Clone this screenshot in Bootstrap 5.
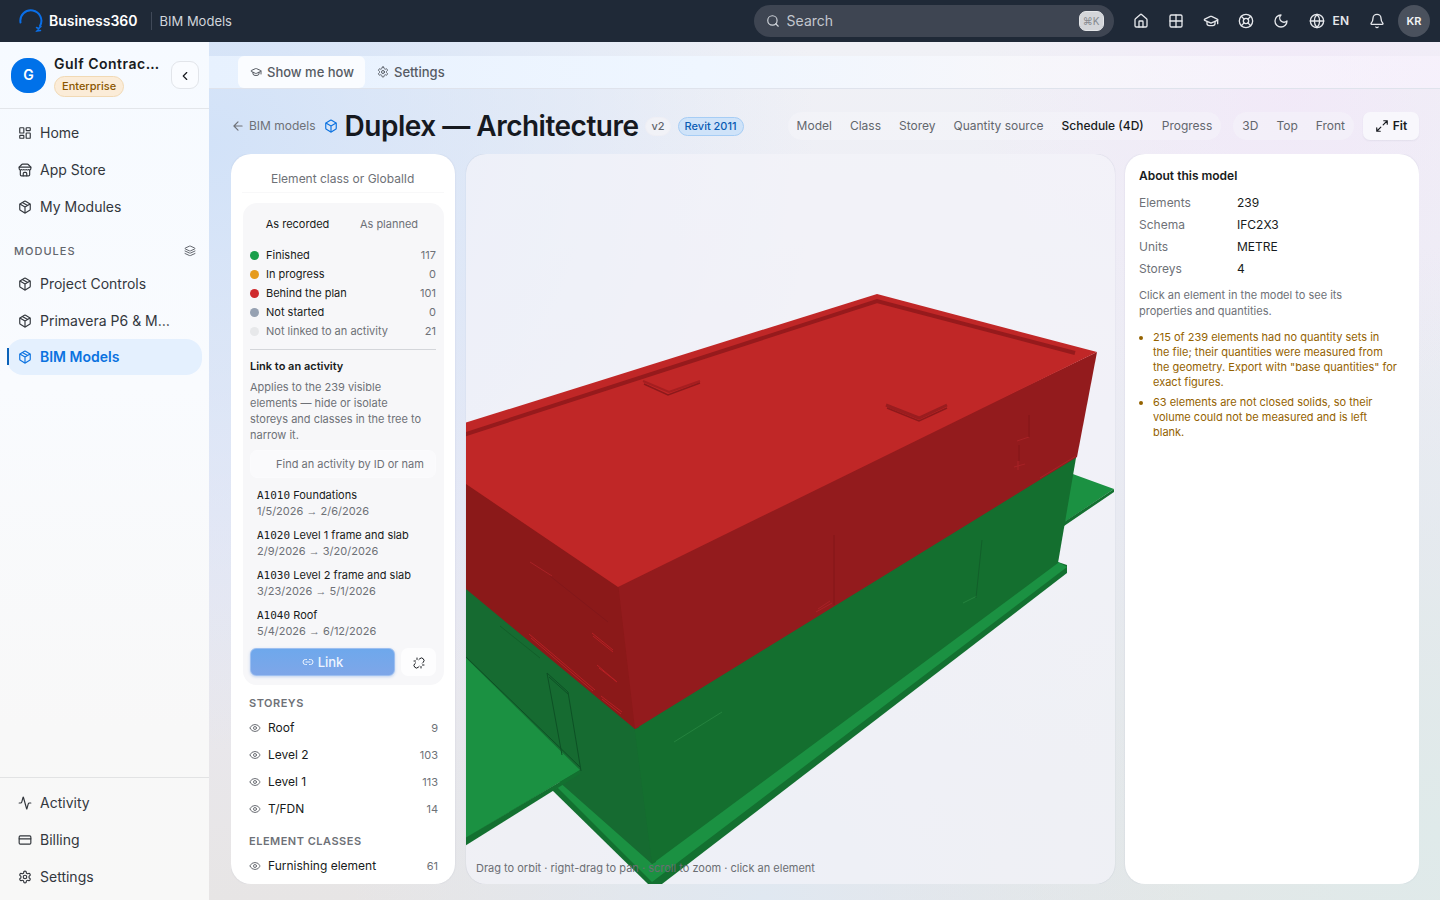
<!DOCTYPE html>
<html lang="en">
<head>
<meta charset="utf-8">
<meta name="viewport" content="width=device-width, initial-scale=1">
<title>BIM Models – Business360</title>
<link rel="stylesheet" href="https://cdn.jsdelivr.net/npm/bootstrap@5.3.0/dist/css/bootstrap.min.css">
<style>
  body { font-family: Inter, "Liberation Sans", sans-serif; font-size: 12px; line-height: 16px; color: #181b20; }
  a { color: inherit; text-decoration: none; }
  button { color: inherit; }
  .ico { width: 14px; height: 14px; flex: none; fill: none; stroke: currentColor; stroke-width: 2; stroke-linecap: round; stroke-linejoin: round; }
  .ico-16 { width: 16px; height: 16px; }
  .ico-12 { width: 12px; height: 12px; }
  .text-soft { color: #6e7177; }
  .text-brand { color: #0b72e0; }

  /* top bar */
  .topbar { height: 42px; background: #1f2937; color: #e5e7eb; padding: 0 10px 0 19px; }
  .brand-name { font-size: 14px; font-weight: 600; color: #fff; margin-left: 6px; }
  .brand-sub { font-size: 13px; color: #d1d5db; border-left: 1px solid #404958; margin-left: 14px; padding: 1px 0 1px 7px; }
  .search-box { width: 360px; height: 32px; border-radius: 16px; background: #3e4552; padding: 0 10px 0 12px; margin-right: 10px; color: #d1d5db; }
  .search-box input { background: none; border: 0; outline: 0; font-size: 14px; color: #fff; padding: 0 0 0 7px; min-width: 0; }
  .search-box input::placeholder { color: #c3c7ce; opacity: 1; }
  .keycap { font: 10px/18px Inter, "DejaVu Sans", sans-serif; color: #85898f; background: #d3d5d9; border: 1px solid #e4e6e9; border-radius: 7px; width: 25px; text-align: center; padding: 0; }
  .top-btn { width: 35px; height: 32px; border: 0; background: none; padding: 0; }
  .lang-btn { width: auto; font-size: 12px; font-weight: 600; margin: 0 10px; }
  .user-dot { width: 32px; height: 32px; border-radius: 50%; border: 0; background: #4a515d; color: #f3f4f6; font-size: 11px; font-weight: 600; }

  /* sidebar */
  .side { width: 209px; flex: none; background: linear-gradient(180deg, #f6faff 0, #f9fbfe 40%, #f8f8f8 80%, #f8f8f7 100%); }
  .side-head { height: 67px; padding: 0 10px 0 11px; border-bottom: 1px solid #e3e6ea; }
  .org-dot { width: 35px; height: 35px; flex: none; border-radius: 16px; background: #0071e9; color: #fff; font-size: 14px; font-weight: 600; }
  .org-name { font-size: 14px; font-weight: 600; line-height: 20px; letter-spacing: .5px; }
  .tier { font-size: 11px; font-weight: 500; line-height: 19px; color: #8a5600; background: #fbecd8; border: 1px solid #f1d9b4; border-radius: 11px; padding: 0 7px; margin-top: 2px; }
  .fold-btn { width: 28px; height: 28px; flex: none; border: 1px solid #e2e5ea; border-radius: 9px; background: #fafcff; padding: 0; }
  .side-nav { padding-top: 5px; }
  .side-link { height: 37px; padding: 0 18px; font-size: 14px; color: #33373d; gap: 8px; }
  .side-link.current { color: #0b72e0; font-weight: 600; height: 36px; margin: 0 7px; padding: 0 11px; border-radius: 16px; background: #e4f0fe; position: relative; }
  .side-link.current::before { content: ""; position: absolute; left: 0; top: 9px; width: 2px; height: 17px; background: #0b62b8; }
  .side-cap { font-size: 11px; font-weight: 500; letter-spacing: 1px; color: #62666d; padding: 0 13px 0 14px; height: 24px; margin-top: 14px; margin-bottom: 2px; }
  .side-foot { border-top: 1px solid #e2e3e4; padding: 6px 0 5px; }

  /* main area */
  .stage { background:
      radial-gradient(circle at 88% 6%, rgba(243,228,250,.55), rgba(243,228,250,0) 24%),
      radial-gradient(circle at 0 12%, #d2e2f8 0, rgba(210,226,248,0) 42%),
      radial-gradient(circle at 45% 100%, #e0e8f1 0, rgba(224,232,241,0) 38%),
      radial-gradient(circle at 100% 92%, #dfeaea 0, rgba(223,234,234,0) 40%),
      linear-gradient(180deg, #f0f1f6 0, #ebeaf4 55%, #e7e5e5 100%); }
  .subbar { margin-top: 14px; height: 33px; border-bottom: 1px solid #dfe3ec; padding-left: 29px; background: linear-gradient(90deg, #e7f1fe 0, #eff6ff 40%, rgba(248,248,252,.8) 65%, rgba(248,242,253,.7) 100%); }
  .sub-btn { height: 32px; border: 0; border-radius: 6px; background: none; color: #565b63; font-size: 13px; font-weight: 500; padding: 0 11px 0 12px; gap: 5px; }
  .sub-btn.lit { background: #fafcff; }
  .work { padding: 22px 21px 16px 22px; }
  .title-row { height: 30px; margin-bottom: 13px; }
  .page-title { font-size: 28px; line-height: 30px; font-weight: 600; margin: 0 7px; letter-spacing: -.5px; color: #16191f; }
  .pill { font-size: 11px; font-weight: 500; line-height: 17px; border: 1px solid #efeff5; border-radius: 10px; background: #f1f2f7; color: #62666d; padding: 0 5px; }
  .pill.blue { background: #cfe3f9; border-color: #a6cdf5; color: #0a5cb4; padding: 0 6px; margin-left: 7px; }
  .seg { border-radius: 14px; background: rgba(247,247,251,.45); height: 28px; }
  .seg button { border: 0; background: none; padding: 0 9px; font-size: 12px; color: #62666d; }
  .seg button.on { color: #181b20; font-weight: 500; }
  .view-seg { margin: 0 9px 0 12px; }
  .fit-btn { border: 0; background: #f8f7fc; border-radius: 7px; height: 28px; width: 56px; font-size: 12px; font-weight: 600; box-shadow: 0 1px 2px rgba(20,30,60,.06); }

  .pane { background: #fff; border-radius: 20px; overflow: hidden; box-shadow: 0 0 2px rgba(40,60,100,.12); }
  .tree { width: 224px; flex: none; padding: 11px 11px 0; }
  .plain-input { border: 0; outline: 0; background: none; width: 100%; padding: 0; color: inherit; }
  .plain-input::placeholder { color: #6e7177; opacity: 1; }
  .tree-find { height: 28px; font-size: 12px; padding-left: 29px; border-bottom: 1px solid #f8f8f9; margin-bottom: 10px; }
  .sched { background: #f7f7f9; border-radius: 14px; margin: 0 0 9px 1px; padding: 10px 8px 9px 7px; font-size: 11px; }
  .sched-tabs { height: 22px; margin-bottom: 12px; }
  .sched-tabs button { border: 0; background: none; padding: 0; width: 88px; color: #6e7177; }
  .sched-tabs button.on { color: #181b20; width: 95px; }
  .key-row { height: 16px; margin-bottom: 3px; }
  .key-dot { width: 9px; height: 9px; border-radius: 50%; margin-right: 7px; }
  .c-done { background: #1a9f4b; } .c-prog { background: #e69b1c; } .c-late { background: #cf2a2e; } .c-wait { background: #96a1b2; } .c-none { background: #e7e8ea; }
  .sched hr { margin: 10px 0 7px; color: #d4d6da; opacity: 1; }
  .act-find { background: #fafafc; border: 1px solid #fbfbfd; border-radius: 7px; height: 28px; padding-left: 25px; padding-right: 11px; font-size: 11px; margin: 7px 0 5px; }
  .act { border: 0; background: none; display: block; padding: 4px 7px; line-height: 16px; text-align: left; width: 100%; height: 40px; }
  .act-id { font-family: "DejaVu Sans Mono", monospace; line-height: 1; }
  .arrow { font-family: "Liberation Sans", sans-serif; line-height: 1; }
  .link-row { margin-top: 5px; }
  .link-btn { height: 28px; border: 1px solid #9dbff0; border-radius: 6px; background: linear-gradient(180deg, #6ea8ec, #7ea6e8); color: #eef5ff; font-size: 13px; font-weight: 500; box-shadow: 0 1px 3px rgba(70,130,220,.3); }
  .cut-btn { width: 35px; height: 28px; border: 0; border-radius: 7px; background: #fdfdfe; margin-left: 6px; }
  .tree-cap { font-size: 11px; font-weight: 600; letter-spacing: .5px; color: #6e7177; margin: 0 0 2px 7px; line-height: 18px; }
  .tree-cap.next { margin-top: 10px; }
  .tree-row { height: 27px; padding: 0 6px 0 7px; }
  .tree-row .ico { color: #6e7177; margin-right: 7px; }
  .count { font-size: 11px; }
  .panes { gap: 10px; }

  .view { min-width: 0; margin-left: 1px; position: relative; border-radius: 20px; overflow: hidden; background: rgba(243,244,249,.7); box-shadow: 0 0 1px rgba(60,80,120,.3); }
  .view svg { display: block; width: 100%; height: 100%; }
  .view-hint { position: absolute; left: 10px; bottom: 8px; font-size: 11px; color: #6b6e73; }

  .about { width: 294px; flex: none; padding: 13px 13px 0 14px; }
  .about h2, .sched h2 { font-size: 12px; line-height: 18px; font-weight: 600; margin: 0; }
  .sched h2 { font-size: 11px; }
  .about dl { display: grid; grid-template-columns: 98px 1fr; margin: 7px 0 7px; line-height: 22px; }
  .about dt { font-weight: 400; color: #6e7177; } .about dd { margin: 0; }
  .about p { font-size: 11px; margin-bottom: 11px; color: #6e7177; }
  .about ul { font-size: 11px; line-height: 15px; color: #946200; padding-left: 14px; margin: 0; }
  .about li { margin-bottom: 5px; }
</style>
</head>
<body>
<svg class="d-none" aria-hidden="true">
  <symbol id="i-search" viewBox="0 0 24 24"><circle cx="11" cy="11" r="8"/><path d="m21 21-4.300-4.300"/></symbol>
  <symbol id="i-house" viewBox="0 0 24 24"><path d="M15 21v-8a1 1 0 0 0-1-1h-4a1 1 0 0 0-1 1v8"/><path d="M3 10a2 2 0 0 1 .7-1.500l7-6a2 2 0 0 1 2.600 0l7 6A2 2 0 0 1 21 10v9a2 2 0 0 1-2 2H5a2 2 0 0 1-2-2z"/></symbol>
  <symbol id="i-grid" viewBox="0 0 24 24"><rect x="3" y="3" width="18" height="18" rx="2"/><path d="M3 12h18M12 3v18"/></symbol>
  <symbol id="i-cap" viewBox="0 0 24 24"><path d="M21.420 10.920a1 1 0 0 0-.02-1.840L12.830 5.180a2 2 0 0 0-1.660 0L2.600 9.080a1 1 0 0 0 0 1.830l8.570 3.910a2 2 0 0 0 1.660 0z"/><path d="M22 10v6M6 12.500V16a6 3 0 0 0 12 0v-3.500"/></symbol>
  <symbol id="i-help" viewBox="0 0 24 24"><circle cx="12" cy="12" r="10"/><circle cx="12" cy="12" r="4"/><path d="m4.930 4.930 4.240 4.240M14.830 9.170l4.240-4.240M14.830 14.830l4.240 4.240M9.170 14.830l-4.240 4.240"/></symbol>
  <symbol id="i-moon" viewBox="0 0 24 24"><path d="M12 3a6 6 0 0 0 9 9 9 9 0 1 1-9-9Z"/></symbol>
  <symbol id="i-globe" viewBox="0 0 24 24"><circle cx="12" cy="12" r="10"/><path d="M12 2a14.500 14.500 0 0 0 0 20 14.500 14.500 0 0 0 0-20M2 12h20"/></symbol>
  <symbol id="i-bell" viewBox="0 0 24 24"><path d="M10.270 21a2 2 0 0 0 3.460 0"/><path d="M3.260 15.330A1 1 0 0 0 4 17h16a1 1 0 0 0 .74-1.670C19.410 13.960 18 12.500 18 8A6 6 0 0 0 6 8c0 4.500-1.410 5.960-2.740 7.330"/></symbol>
  <symbol id="i-dash" viewBox="0 0 24 24"><rect x="3" y="3" width="7" height="9" rx="1"/><rect x="14" y="3" width="7" height="5" rx="1"/><rect x="14" y="12" width="7" height="9" rx="1"/><rect x="3" y="16" width="7" height="5" rx="1"/></symbol>
  <symbol id="i-store" viewBox="0 0 24 24"><path d="m2 7 4.410-4.410A2 2 0 0 1 7.830 2h8.340a2 2 0 0 1 1.420.59L22 7"/><path d="M4 12v8a2 2 0 0 0 2 2h12a2 2 0 0 0 2-2v-8"/><path d="M15 22v-4a2 2 0 0 0-2-2h-2a2 2 0 0 0-2 2v4M2 7h20v3a2 2 0 0 1-2 2 2.700 2.700 0 0 1-1.590-.63.700.700 0 0 0-.82 0A2.700 2.700 0 0 1 16 12a2.700 2.700 0 0 1-1.590-.63.700.700 0 0 0-.82 0A2.700 2.700 0 0 1 12 12a2.700 2.700 0 0 1-1.590-.63.700.700 0 0 0-.82 0A2.700 2.700 0 0 1 8 12a2.700 2.700 0 0 1-1.590-.63.700.700 0 0 0-.82 0A2.700 2.700 0 0 1 4 12a2 2 0 0 1-2-2V7"/></symbol>
  <symbol id="i-pack" viewBox="0 0 24 24"><path d="M11 21.730a2 2 0 0 0 2 0l7-4A2 2 0 0 0 21 16V8a2 2 0 0 0-1-1.730l-7-4a2 2 0 0 0-2 0l-7 4A2 2 0 0 0 3 8v8a2 2 0 0 0 1 1.730z"/><path d="M12 22V12M3.300 7 12 12l8.700-5M7.500 4.270l9 5.150"/></symbol>
  <symbol id="i-box" viewBox="0 0 24 24"><path d="M21 8a2 2 0 0 0-1-1.730l-7-4a2 2 0 0 0-2 0l-7 4A2 2 0 0 0 3 8v8a2 2 0 0 0 1 1.730l7 4a2 2 0 0 0 2 0l7-4A2 2 0 0 0 21 16Z"/><path d="m3.300 7 8.700 5 8.700-5M12 22V12"/></symbol>
  <symbol id="i-layers" viewBox="0 0 24 24"><path d="M12.830 2.180a2 2 0 0 0-1.660 0L2.600 6.080a1 1 0 0 0 0 1.830l8.580 3.910a2 2 0 0 0 1.660 0l8.580-3.900a1 1 0 0 0 0-1.830z"/><path d="m2 12 9.170 4.160a2 2 0 0 0 1.660 0L22 12M2 17l9.170 4.160a2 2 0 0 0 1.660 0L22 17"/></symbol>
  <symbol id="i-pulse" viewBox="0 0 24 24"><path d="M22 12h-2.480a2 2 0 0 0-1.930 1.460l-2.350 8.360a.25.25 0 0 1-.48 0L9.240 2.180a.25.25 0 0 0-.48 0l-2.350 8.360A2 2 0 0 1 4.490 12H2"/></symbol>
  <symbol id="i-card" viewBox="0 0 24 24"><rect x="2" y="5" width="20" height="14" rx="2"/><path d="M2 10h20"/></symbol>
  <symbol id="i-gear" viewBox="0 0 24 24"><path d="M12.220 2h-.44a2 2 0 0 0-2 2v.18a2 2 0 0 1-1 1.730l-.43.25a2 2 0 0 1-2 0l-.15-.08a2 2 0 0 0-2.730.73l-.22.38a2 2 0 0 0 .73 2.730l.15.100a2 2 0 0 1 1 1.720v.51a2 2 0 0 1-1 1.740l-.15.090a2 2 0 0 0-.73 2.730l.22.380a2 2 0 0 0 2.730.73l.15-.08a2 2 0 0 1 2 0l.43.250a2 2 0 0 1 1 1.730V20a2 2 0 0 0 2 2h.44a2 2 0 0 0 2-2v-.18a2 2 0 0 1 1-1.730l.43-.25a2 2 0 0 1 2 0l.15.080a2 2 0 0 0 2.730-.73l.22-.39a2 2 0 0 0-.73-2.730l-.15-.08a2 2 0 0 1-1-1.740v-.5a2 2 0 0 1 1-1.740l.15-.09a2 2 0 0 0 .73-2.730l-.22-.38a2 2 0 0 0-2.730-.73l-.15.080a2 2 0 0 1-2 0l-.43-.25a2 2 0 0 1-1-1.730V4a2 2 0 0 0-2-2z"/><circle cx="12" cy="12" r="3"/></symbol>
  <symbol id="i-chev" viewBox="0 0 24 24"><path d="m15 18-6-6 6-6"/></symbol>
  <symbol id="i-back" viewBox="0 0 24 24"><path d="m12 19-7-7 7-7M19 12H5"/></symbol>
  <symbol id="i-max" viewBox="0 0 24 24"><path d="M15 3h6v6M21 3l-7 7M3 21l7-7M9 21H3v-6"/></symbol>
  <symbol id="i-link" viewBox="0 0 24 24"><path d="M9 17H7A5 5 0 0 1 7 7h2M15 7h2a5 5 0 1 1 0 10h-2M8 12h8"/></symbol>
  <symbol id="i-unlink" viewBox="0 0 24 24"><path d="m18.840 12.250 1.720-1.710a5 5 0 0 0-7.070-7.070l-1.720 1.710M5.170 11.750l-1.710 1.710a5 5 0 0 0 7.070 7.070l1.710-1.710M8 2v3M2 8h3M16 19v3M19 16h3"/></symbol>
  <symbol id="i-eye" viewBox="0 0 24 24"><path d="M2.060 12.350a1 1 0 0 1 0-.7 10.750 10.750 0 0 1 19.880 0 1 1 0 0 1 0 .7 10.750 10.750 0 0 1-19.880 0"/><circle cx="12" cy="12" r="3"/></symbol>
</svg>

<div class="d-flex flex-column vh-100 overflow-hidden">
  <header class="topbar d-flex align-items-center flex-shrink-0">
    <a href="#" class="d-flex align-items-center">
      <svg width="24" height="24" viewBox="0 0 24 24" fill="none" stroke="#0a6fe8" stroke-width="2" stroke-linecap="round"><path d="M1.500 13.500A10.500 10.500 0 1 1 21 17"/><path d="m17.500 18.500 2 1 2.500-2M20 19.500l-2 2.500 3.500-.5" stroke-width="1.500"/></svg>
      <span class="brand-name">Business360</span>
    </a>
    <span class="brand-sub">BIM Models</span>
    <label class="search-box d-flex align-items-center ms-auto">
      <svg class="ico"><use href="#i-search"/></svg>
      <input type="text" class="flex-grow-1" placeholder="Search" aria-label="Search">
      <kbd class="keycap">⌘K</kbd>
    </label>
    <button class="top-btn" aria-label="Home"><svg class="ico ico-16"><use href="#i-house"/></svg></button>
    <button class="top-btn" aria-label="Apps"><svg class="ico ico-16"><use href="#i-grid"/></svg></button>
    <button class="top-btn" aria-label="Learn"><svg class="ico ico-16"><use href="#i-cap"/></svg></button>
    <button class="top-btn" aria-label="Help"><svg class="ico ico-16"><use href="#i-help"/></svg></button>
    <button class="top-btn" aria-label="Dark mode"><svg class="ico ico-16"><use href="#i-moon"/></svg></button>
    <button class="top-btn lang-btn d-flex align-items-center gap-2"><svg class="ico ico-16"><use href="#i-globe"/></svg><span>EN</span></button>
    <button class="top-btn me-1" aria-label="Notifications"><svg class="ico ico-16"><use href="#i-bell"/></svg></button>
    <button class="user-dot p-0">KR</button>
  </header>

  <div class="d-flex flex-grow-1 overflow-hidden">
    <aside class="side d-flex flex-column">
      <div class="side-head d-flex align-items-center">
        <span class="org-dot d-flex align-items-center justify-content-center">G</span>
        <div class="ms-2 flex-grow-1 d-flex flex-column align-items-start">
          <span class="org-name text-nowrap">Gulf Contrac…</span>
          <span class="tier">Enterprise</span>
        </div>
        <button class="fold-btn" aria-label="Collapse sidebar"><svg class="ico"><use href="#i-chev"/></svg></button>
      </div>
      <nav class="side-nav d-flex flex-column">
        <a href="#" class="side-link d-flex align-items-center"><svg class="ico"><use href="#i-dash"/></svg>Home</a>
        <a href="#" class="side-link d-flex align-items-center"><svg class="ico"><use href="#i-store"/></svg>App Store</a>
        <a href="#" class="side-link d-flex align-items-center"><svg class="ico"><use href="#i-pack"/></svg>My Modules</a>
        <div class="side-cap d-flex align-items-center justify-content-between">MODULES<svg class="ico ico-12"><use href="#i-layers"/></svg></div>
        <a href="#" class="side-link d-flex align-items-center"><svg class="ico"><use href="#i-pack"/></svg>Project Controls</a>
        <a href="#" class="side-link d-flex align-items-center"><svg class="ico"><use href="#i-pack"/></svg>Primavera P6 &amp; M…</a>
        <a href="#" class="side-link current d-flex align-items-center" aria-current="page"><svg class="ico"><use href="#i-pack"/></svg>BIM Models</a>
      </nav>
      <nav class="side-foot mt-auto">
        <a href="#" class="side-link d-flex align-items-center"><svg class="ico"><use href="#i-pulse"/></svg>Activity</a>
        <a href="#" class="side-link d-flex align-items-center"><svg class="ico"><use href="#i-card"/></svg>Billing</a>
        <a href="#" class="side-link d-flex align-items-center"><svg class="ico"><use href="#i-gear"/></svg>Settings</a>
      </nav>
    </aside>

    <main class="stage flex-grow-1 d-flex flex-column overflow-hidden">
      <div class="subbar d-flex flex-shrink-0">
        <button class="sub-btn lit d-flex align-items-center"><svg class="ico ico-12"><use href="#i-cap"/></svg>Show me how</button>
        <button class="sub-btn d-flex align-items-center"><svg class="ico ico-12"><use href="#i-gear"/></svg>Settings</button>
      </div>
      <div class="work flex-grow-1 d-flex flex-column overflow-hidden">
        <div class="title-row d-flex align-items-center flex-shrink-0">
          <a href="#" class="text-soft d-flex align-items-center gap-1 me-2"><svg class="ico"><use href="#i-back"/></svg>BIM models</a>
          <svg class="ico text-brand"><use href="#i-box"/></svg>
          <h1 class="page-title text-nowrap">Duplex — Architecture</h1>
          <span class="pill">v2</span>
          <span class="pill blue text-nowrap">Revit 2011</span>
          <div class="seg d-flex ms-auto text-nowrap">
            <button>Model</button><button>Class</button><button>Storey</button><button>Quantity source</button><button class="on">Schedule (4D)</button><button>Progress</button>
          </div>
          <div class="seg view-seg d-flex">
            <button>3D</button><button>Top</button><button>Front</button>
          </div>
          <button class="fit-btn d-flex align-items-center justify-content-center gap-1"><svg class="ico"><use href="#i-max"/></svg>Fit</button>
        </div>

        <div class="d-flex flex-grow-1 overflow-hidden panes">
          <section class="pane tree">
            <input type="text" class="plain-input tree-find" placeholder="Element class or GlobalId" aria-label="Element class or GlobalId">
            <div class="sched">
              <div class="sched-tabs d-flex"><button class="on">As recorded</button><button>As planned</button></div>
              <div class="key-row d-flex align-items-center"><span class="key-dot c-done"></span>Finished<span class="ms-auto text-soft">117</span></div>
              <div class="key-row d-flex align-items-center"><span class="key-dot c-prog"></span>In progress<span class="ms-auto text-soft">0</span></div>
              <div class="key-row d-flex align-items-center"><span class="key-dot c-late"></span>Behind the plan<span class="ms-auto text-soft">101</span></div>
              <div class="key-row d-flex align-items-center"><span class="key-dot c-wait"></span>Not started<span class="ms-auto text-soft">0</span></div>
              <div class="key-row d-flex align-items-center text-soft"><span class="key-dot c-none"></span>Not linked to an activity<span class="ms-auto">21</span></div>
              <hr>
              <h2>Link to an activity</h2>
              <p class="text-soft mb-0 mt-1">Applies to the 239 visible<br>elements — hide or isolate<br>storeys and classes in the tree to<br>narrow it.</p>
              <input type="text" class="plain-input act-find" placeholder="Find an activity by ID or name" aria-label="Find an activity by ID or name">
              <button class="act"><span class="act-id">A1010</span> Foundations<br><span class="text-soft">1/5/2026 <span class="arrow">→</span> 2/6/2026</span></button>
              <button class="act"><span class="act-id">A1020</span> Level 1 frame and slab<br><span class="text-soft">2/9/2026 <span class="arrow">→</span> 3/20/2026</span></button>
              <button class="act"><span class="act-id">A1030</span> Level 2 frame and slab<br><span class="text-soft">3/23/2026 <span class="arrow">→</span> 5/1/2026</span></button>
              <button class="act"><span class="act-id">A1040</span> Roof<br><span class="text-soft">5/4/2026 <span class="arrow">→</span> 6/12/2026</span></button>
              <div class="link-row d-flex">
                <button class="link-btn flex-grow-1 d-flex align-items-center justify-content-center gap-1"><svg class="ico ico-12"><use href="#i-link"/></svg>Link</button>
                <button class="cut-btn p-0" aria-label="Unlink"><svg class="ico ico-12"><use href="#i-unlink"/></svg></button>
              </div>
            </div>
            <h3 class="tree-cap">STOREYS</h3>
            <div class="tree-row d-flex align-items-center"><svg class="ico ico-12"><use href="#i-eye"/></svg>Roof<span class="count ms-auto text-soft">9</span></div>
            <div class="tree-row d-flex align-items-center"><svg class="ico ico-12"><use href="#i-eye"/></svg>Level 2<span class="count ms-auto text-soft">103</span></div>
            <div class="tree-row d-flex align-items-center"><svg class="ico ico-12"><use href="#i-eye"/></svg>Level 1<span class="count ms-auto text-soft">113</span></div>
            <div class="tree-row d-flex align-items-center"><svg class="ico ico-12"><use href="#i-eye"/></svg>T/FDN<span class="count ms-auto text-soft">14</span></div>
            <h3 class="tree-cap next">ELEMENT CLASSES</h3>
            <div class="tree-row d-flex align-items-center"><svg class="ico ico-12"><use href="#i-eye"/></svg>Furnishing element<span class="count ms-auto text-soft">61</span></div>
          </section>

          <section class="view flex-grow-1">
            <svg viewBox="466 154 649 730" preserveAspectRatio="xMidYMid slice" role="img" aria-label="3D model of the duplex">
              <!-- canopy behind the far corner -->
              <path fill="#1b9142" d="M1070 473 1114 489 1060 525z"/><path fill="#137030" d="M1114 489v3L1064 526v-4z"/>
              <!-- base slab -->
              <path fill="#137030" d="M552 790 648 884H662L1067 573V565L1058 562z"/>
              <path fill="#1b9142" d="M556 786 652 882 1067 567 1058 562 652 862 566 782z"/>
              <!-- ground floor walls -->
              <path fill="#166b31" d="M460 580 640 727 656 862 652 864 540 765 460 720z"/>
              <path fill="#146f2f" d="M634 724 1077 452 1058 563 652 864z"/>
              <!-- upper floor walls -->
              <path fill="#8b1919" d="M460 477 622 584 639 727 635 729 460 584z"/>
              <path fill="#931b1d" d="M618 583 1097 352 1077 457 635 729z"/>
              <!-- roof and parapet -->
              <path fill="#c02727" d="M460 424.500 877 294 1097 352 618 587 460 480z"/>
              <path fill="none" stroke="#961a1c" stroke-width="4" d="M460 436 877 301 1075 353"/>
              <path fill="none" stroke="#a51e20" stroke-width="2" d="m643 381 26 11 31-11"/><path fill="none" stroke="#8d191b" stroke-width="1.500" d="m644 384 24 11 32-12"/>
              <path fill="none" stroke="#9a1d1f" stroke-width="3" d="m886 405 33 13 28-13"/><path fill="none" stroke="#8d191b" stroke-width="1.500" d="m887 408 32 13 28-13"/>
              <!-- near canopy -->
              <path fill="#1b9142" d="M460 652 580 770 460 842z"/><path fill="#137030" d="M580 770v4L460 849v-8z"/>
              <path fill="none" stroke="#0d5125" d="M466 657 580 767M547 673l21 19 13 79M547 673l15 82M549 677l19 17"/>
              <!-- window and sill lines -->
              <g fill="none" stroke="#b62024"><path d="m529 634 66 56M531 638l62 53M592 633l21 17M593 636l20 16M597 665l20 17M599 668l18 14M601 696l21 16M602 699l19 15"/></g>
              <path fill="none" stroke="#a82226" d="m1017 441 12-4M1014 467l11-3M1018 461v9M816 612l16-9M818 609l12-8M1040 478l36-22M530 562l22 14"/>
              <path fill="none" stroke="#821719" d="M834 535v70M550 576l58 46M1029 415v22M1019 445v16"/>
              <path fill="none" stroke="#2b8a45" d="m674 742 48-30M963 603l14-7" opacity=".7"/>
              <path fill="none" stroke="#125f2a" d="M982 540l-6 58M500 626l40 32"/>
            </svg>
            <div class="view-hint">Drag to orbit · right-drag to pan · scroll to zoom · click an element</div>
          </section>

          <section class="pane about">
            <h2>About this model</h2>
            <dl><dt>Elements</dt><dd>239</dd><dt>Schema</dt><dd>IFC2X3</dd><dt>Units</dt><dd>METRE</dd><dt>Storeys</dt><dd>4</dd></dl>
            <p>Click an element in the model to see its<br>properties and quantities.</p>
            <ul>
              <li>215 of 239 elements had no quantity sets in<br>the file; their quantities were measured from<br>the geometry. Export with "base quantities" for<br>exact figures.</li>
              <li>63 elements are not closed solids, so their<br>volume could not be measured and is left<br>blank.</li>
            </ul>
          </section>
        </div>
      </div>
    </main>
  </div>
</div>
<script src="https://cdn.jsdelivr.net/npm/bootstrap@5.3.0/dist/js/bootstrap.bundle.min.js"></script>
</body>
</html>
